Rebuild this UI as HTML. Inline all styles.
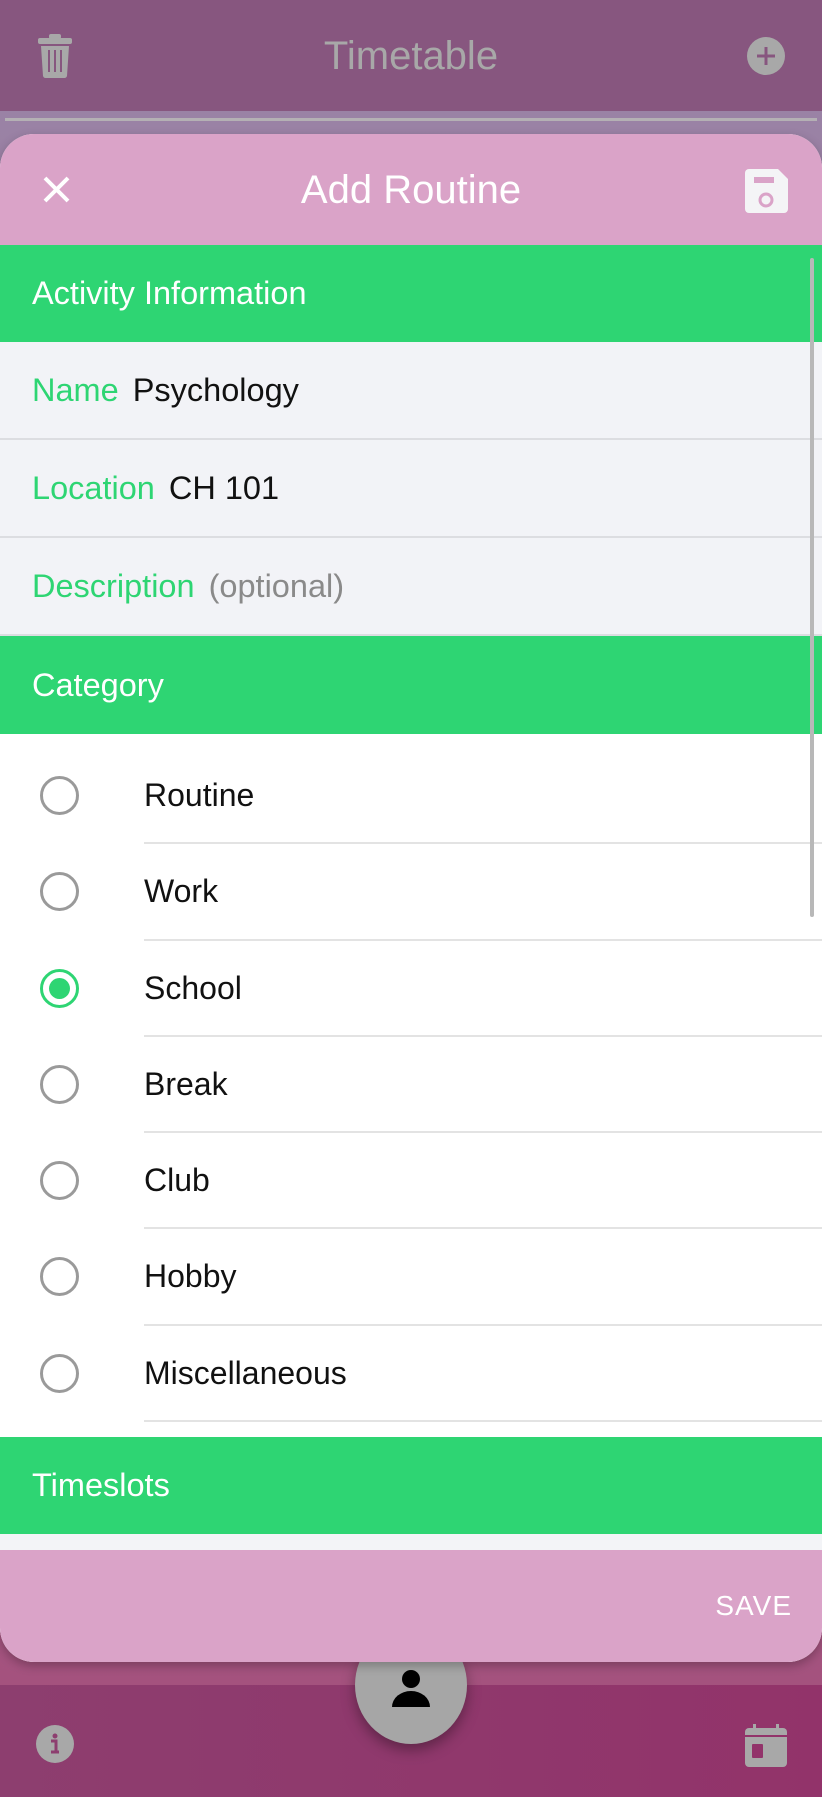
<!DOCTYPE html>
<html><head><meta charset="utf-8"><style>
*{margin:0;padding:0;box-sizing:border-box}
body{width:822px;height:1797px;overflow:hidden;position:relative;font-family:"Liberation Sans",Arial,sans-serif;background:#9a82a5}
.top{position:absolute;left:0;top:0;width:822px;height:111px;background:#87567f}
.top .t{position:absolute;left:0;right:0;top:34px;text-align:center;color:#a8a8a8;font-size:40px}
.divl{position:absolute;left:5px;right:5px;top:118px;height:3px;background:#b4b0b4}
.bgmid{position:absolute;left:0;top:121px;width:822px;height:1564px;background:linear-gradient(#9a82a5,#a4527e)}
.nav{position:absolute;left:0;top:1685px;width:822px;height:112px;background:linear-gradient(90deg,#8d3e6f,#92336a)}
.modal{position:absolute;left:0;top:134px;width:822px;height:1528px;border-radius:34px;overflow:hidden;background:#fff;box-shadow:0 4px 10px rgba(0,0,0,.25)}
.mh{height:111px;background:#daa3c8;position:relative}
.mh .t{position:absolute;left:0;right:0;top:34px;text-align:center;color:#fff;font-size:40px}
.sec{height:97px;background:#2ed573;color:#fff;font-size:32.5px;padding-left:32px;line-height:97px}
.row{height:98px;background:#f2f3f7;border-bottom:2px solid #dcdde1;font-size:32.5px;padding-left:32px;line-height:96px;color:#111}
.row b{font-weight:normal;color:#2ed573;margin-right:14px}
.list{background:#fff}
.it{height:96.3px;position:relative;font-size:32px;color:#111}
.it span{position:absolute;left:144px;top:29px}
.it i{position:absolute;left:40px;top:28px;width:39px;height:39px;border:3px solid #9a9a9a;border-radius:50%}
.it i.on{border-color:#2ed573}
.it i.on:after{content:"";position:absolute;left:6px;top:6px;width:21px;height:21px;border-radius:50%;background:#2ed573}
.it:after{content:"";position:absolute;left:144px;right:0;bottom:0;height:2px;background:#e3e3e3}
.mf{position:absolute;left:0;top:1416px;width:822px;height:112px;background:#daa3c8;border-radius:0 0 34px 34px}
.mf span{position:absolute;right:30px;top:40px;color:#fff;font-size:28px;letter-spacing:1px}
.strip{height:17px;background:#f3f4f7}
.sb{position:absolute;left:810px;top:258px;width:4px;height:659px;background:#b8b8b8;border-radius:2px}
.fab{position:absolute;left:355px;top:1626px;width:112px;height:118px;border-radius:50%;background:#a6a6a6;box-shadow:0 6px 14px rgba(0,0,0,.35)}
</style></head><body>
<div class="bgmid"></div>
<div class="top"><div class="t">Timetable</div>
<svg style="position:absolute;left:37px;top:34px" width="36" height="44" viewBox="0 0 36 44"><rect x="12" y="0" width="12" height="5" rx="2" fill="#a8a8a8"/><rect x="1" y="4" width="34" height="6" rx="2" fill="#a8a8a8"/><path d="M4 12h28l-2 30a3 3 0 0 1-3 2H9a3 3 0 0 1-3-2z" fill="#a8a8a8"/><path d="M12 16v22M18 16v22M24 16v22" stroke="#87567f" stroke-width="2"/></svg>
<svg style="position:absolute;left:746px;top:36px" width="40" height="40"><circle cx="20" cy="20" r="19" fill="#a8a8a8"/><path d="M20 11v18M11 20h18" stroke="#87567f" stroke-width="3"/></svg>
</div>
<div class="divl"></div>
<div class="nav">
<svg style="position:absolute;left:36px;top:40px" width="38" height="38"><circle cx="19" cy="19" r="19" fill="#a8a8a8"/><circle cx="19" cy="11" r="2.5" fill="#8d3e6f"/><path d="M15 16h5v11h3M15 27h8" stroke="#8d3e6f" stroke-width="3" fill="none"/></svg>
<svg style="position:absolute;left:745px;top:39px" width="42" height="43"><rect x="0" y="4" width="42" height="39" rx="4" fill="#a8a8a8"/><rect x="8" y="0" width="3" height="6" fill="#a8a8a8"/><rect x="31" y="0" width="3" height="6" fill="#a8a8a8"/><rect x="0" y="11" width="42" height="2" fill="#92336a"/><rect x="7" y="20" width="11" height="14" rx="1" fill="#92336a"/></svg>
</div>
<div class="fab"><svg style="position:absolute;left:36px;top:44px" width="40" height="38"><ellipse cx="20" cy="9" rx="9" ry="9" fill="#000"/><path d="M1 37a19 16 0 0 1 38 0z" fill="#000"/></svg></div>
<div class="modal">
<div class="mh">
<svg style="position:absolute;left:43px;top:42px" width="27" height="27"><path d="M2 2L25 25M25 2L2 25" stroke="#fff" stroke-width="4"/></svg>
<div class="t">Add Routine</div>
<svg style="position:absolute;left:745px;top:35px" width="43" height="44"><path d="M4 0h29l10 10v30a4 4 0 0 1-4 4H4a4 4 0 0 1-4-4V4a4 4 0 0 1 4-4z" fill="#f4f4f6"/><rect x="9" y="8" width="20" height="6" fill="#daa3c8"/><circle cx="21" cy="31" r="6" fill="none" stroke="#daa3c8" stroke-width="3"/></svg>
</div>
<div class="sec">Activity Information</div>
<div class="row"><b>Name</b>Psychology</div>
<div class="row"><b>Location</b>CH 101</div>
<div class="row"><b>Description</b><span style="color:#8a8a8a">(optional)</span></div>
<div class="sec" style="height:98px;line-height:98px">Category</div>
<div class="list" style="padding-top:14px;height:703px">
<div class="it"><i></i><span>Routine</span></div>
<div class="it"><i></i><span>Work</span></div>
<div class="it"><i class="on"></i><span>School</span></div>
<div class="it"><i></i><span>Break</span></div>
<div class="it"><i></i><span>Club</span></div>
<div class="it"><i></i><span>Hobby</span></div>
<div class="it"><i></i><span>Miscellaneous</span></div>
</div>
<div class="sec">Timeslots</div>
<div class="strip"></div>
<div class="mf"><span>SAVE</span></div>
</div>
<div class="sb"></div>
</body></html>
